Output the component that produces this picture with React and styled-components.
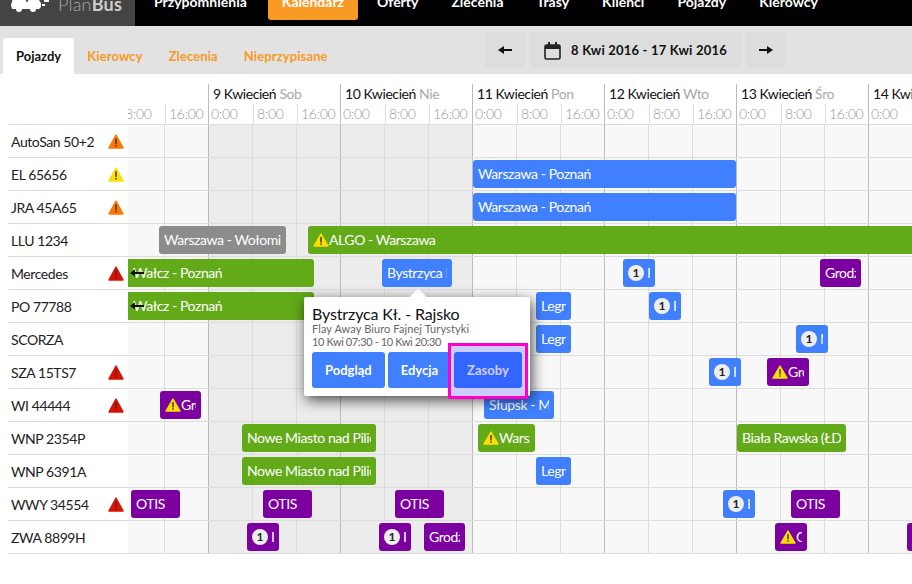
import React from 'react';
import styled, { createGlobalStyle } from 'styled-components';

const Global = createGlobalStyle`
  html, body { margin: 0; padding: 0; background: #fff; overflow: hidden; }
  body { font-family: Lato, "Noto Sans", sans-serif; font-size: 14px; color: #222; letter-spacing: -.42px; }
  * { box-sizing: border-box; }
`;

const Page = styled.div`position: relative; width: 912px; height: 584px; overflow: hidden;`;

const TopBar = styled.header`display: flex; height: 26px; background: #000; overflow: hidden;`;
const LogoBox = styled.div`
  width: 135px; height: 26px; background: #444; display: flex; align-items: flex-end; padding: 0 0 13px 11px; flex: none;
`;
const LogoName = styled.span`
  margin-left: 9px; font-size: 18px; line-height: 18px; color: #aaa; font-weight: 300; letter-spacing: .2px;
  b { font-weight: 700; color: #ccc; }
`;
const Nav = styled.nav`display: flex; gap: 5px; margin-left: 5px; height: 20px; align-items: flex-end;`;
const NavItem = styled.a`
  display: block; padding: 13px 14px 0; color: #fff; font-weight: 700; font-size: 14px; line-height: 17px; height: 40px;
  margin-top: -20px; white-space: nowrap; border-radius: 3px; letter-spacing: 0;
  background: ${p => (p.$active ? '#f99a25' : 'transparent')};
  &:first-child { margin-right: 2px; }
`;

const SubBar = styled.div`display: flex; height: 48px; background: #e2e2e2; padding-left: 3px;`;
const Tabs = styled.div`display: flex; align-self: flex-end;`;
const Tab = styled.div`
  height: 36px; padding: 0 13px; display: flex; align-items: center; font-size: 13px; font-weight: 700;
  border-radius: 3px 3px 0 0; letter-spacing: ${p => (p.$active ? '0' : '.1px')};
  color: ${p => (p.$active ? '#111' : '#f99a25')}; background: ${p => (p.$active ? '#fff' : 'transparent')};
`;
const DateNav = styled.div`display: flex; gap: 5px; margin: 6px 126px 0 auto; height: 36px;`;
const NavButton = styled.div`
  width: ${p => p.$w}px; height: 36px; background: #ddd; border-radius: 3px; display: flex; align-items: center; justify-content: center;
  gap: 10px; font-size: 13px; font-weight: 700; color: #111; letter-spacing: .2px;
`;

const Scheduler = styled.div`padding-top: 10px;`;
const HeadRow = styled.div`margin-left: 8px; border-bottom: 1px solid #ddd; height: 41px; padding-left: 120px;`;
const HeadClip = styled.div`overflow: hidden; height: 40px;`;
const HeadDays = styled.div`display: flex; margin-left: -52px; width: 1400px;`;
const Day = styled.div`width: 132px; height: 40px; flex: none; border-left: 1px solid #bbb;`;
const DayTitle = styled.div`
  height: 20px; line-height: 20px; padding-left: 4px; color: #111; white-space: nowrap;
  span { color: #aaa; }
`;
const Hours = styled.div`display: flex; height: 20px;`;
const Hour = styled.div`
  width: 44px; flex: none; line-height: 20px; padding-left: 2px; color: #999; font-weight: 300; white-space: nowrap; letter-spacing: -.3px;
  & + & { border-left: 1px solid #ddd; padding-left: 3px; }
`;

const Row = styled.div`display: flex; height: 33px; margin-left: 8px; border-bottom: 1px solid #ddd;`;
const Label = styled.div`
  width: 120px; flex: none; display: flex; align-items: center; justify-content: space-between; padding: 0 4px 0 3px; color: #222; white-space: nowrap;
`;
const Track = styled.div`
  position: relative; flex: 1; overflow: hidden; background-color: #f8f8f8;
  background-image:
    linear-gradient(90deg, #bbb 1px, transparent 1px),
    linear-gradient(90deg, #ddd 1px, transparent 1px),
    linear-gradient(90deg, #ececec, #ececec);
  background-size: 132px 100%, 44px 100%, 264px 100%;
  background-position: 80px 0, 36px 0, 80px 0;
  background-repeat: repeat-x, repeat-x, no-repeat;
`;

const COLORS = { blue: '#4080ff', green: '#62aa18', purple: '#7c00a0', gray: '#8c8c8c' };
const Event = styled.div`
  position: absolute; top: 2px; height: 28px; padding: 0 5px; display: flex; align-items: center; color: #fff; white-space: nowrap;
  border-radius: ${p => (p.$flat ? '0 3px 3px 0' : '3px')};
  background: ${p => COLORS[p.$kind]};
`;
const EventText = styled.span`flex: 1; min-width: 0; overflow: hidden; line-height: 18px;`;
const Badge = styled.span`
  flex: none; width: 16px; height: 16px; border-radius: 50%; background: #eee; color: #222; margin-right: 3px;
  font-size: 12px; font-weight: 700; line-height: 16px; text-align: center; letter-spacing: 0;
`;
const ArrowMark = styled.svg`position: absolute; left: 2px; top: 9px;`;

const Popup = styled.div`
  position: absolute; left: 304px; top: 297px; width: 226px; height: 99px; background: #fff; border-radius: 2px; padding: 9px 8px 8px;
  box-shadow: 2px 4px 14px rgba(0, 0, 0, .7);
  &::before {
    content: ''; position: absolute; left: 108px; top: -6px; width: 12px; height: 12px; background: #fff; transform: rotate(45deg);
  }
`;
const PopupTitle = styled.div`position: relative; font-size: 16px; line-height: 16px; color: #111; letter-spacing: -.14px; white-space: nowrap;`;
const PopupSub = styled.div`
  font-size: 11px; line-height: 13px; color: #666; white-space: nowrap;
  letter-spacing: ${p => (p.$tight ? '-.38px' : '.1px')};
`;
const PopupActions = styled.div`display: flex; gap: 3px; margin-top: 4px;`;
const PopupButton = styled.div`
  height: 36px; padding: 0 13px; background: #4080ff; border-radius: 3px; color: #fff; font-size: 13px; font-weight: 700; letter-spacing: 0;
  display: flex; align-items: center; white-space: nowrap;
`;
const Highlight = styled.div`
  position: absolute; left: 144px; top: 46px; width: 80px; height: 56px; border: 3px solid #ff00c8; background: rgba(0, 0, 255, .2);
`;

const Warn = ({ color = '#ffdd00', h = 14 }) => (
  <svg width="16" height={h} viewBox="0 0 16 14" preserveAspectRatio="none" style={{ flex: 'none' }}>
    <path d="M8 1 L15 13 H1 Z" fill={color} stroke={color} strokeWidth="1.4" strokeLinejoin="round" />
    <rect x="7.3" y="4" width="1.4" height="5.5" fill="#333" />
    <rect x="7.3" y="10.3" width="1.4" height="1.5" fill="#333" />
  </svg>
);

const Car = () => (
  <svg width="38" height="22" viewBox="0 0 38 22" style={{ flex: 'none' }}>
    <path d="M3 4 H12 L13 0 H26 L28 9 C29 11 30 11 30 13 V16 L28 18 H25 A3 3 0 0 1 19 18 H11 A3 3 0 0 1 5 18 H1 L0 14 Z" fill="#fff" />
    <path d="M14 8 H18 L16 11.5 Z" fill="#444" />
    <rect x="33" y="9" width="5" height="2" fill="#fff" />
    <rect x="31" y="13" width="3" height="2" fill="#fff" />
  </svg>
);

const ArrowIcon = ({ flip }) => (
  <svg width="14" height="10" viewBox="0 0 14 10" style={flip ? { transform: 'scaleX(-1)' } : undefined}>
    <path d="M0 5 L6 1 V4 H14 V6 H6 V9 Z" fill="#111" />
  </svg>
);

const CalendarIcon = () => (
  <svg width="17" height="19" viewBox="0 0 17 19">
    <rect x="1" y="4" width="15" height="14" rx="1.5" fill="none" stroke="#222" strokeWidth="1.6" />
    <rect x="1" y="4" width="15" height="4" fill="#222" />
    <rect x="4" y="1" width="2" height="5" fill="#222" />
    <rect x="11" y="1" width="2" height="5" fill="#222" />
  </svg>
);

const nav = ['Przypomnienia', 'Kalendarz', 'Oferty', 'Zlecenia', 'Trasy', 'Klienci', 'Pojazdy', 'Kierowcy'];
const days = [
  [8, ''], [9, 'Sob'], [10, 'Nie'], [11, 'Pon'], [12, 'Wto'], [13, 'Śro'], [14, 'Czw'], [15, 'Pią'],
];

const WP = 'Warszawa - Poznań';
const NM = 'Nowe Miasto nad Pilicą';
const WALCZ = 'Wałcz - Poznań';

const rows = [
  { name: 'AutoSan 50+2', warn: '#ff7700', events: [] },
  { name: 'EL 65656', warn: '#ffdd00', events: [{ x: 473, w: 263, k: 'blue', t: WP }] },
  { name: 'JRA 45A65', warn: '#ff7700', events: [{ x: 473, w: 263, k: 'blue', t: WP }] },
  { name: 'LLU 1234', events: [
    { x: 159, w: 127, k: 'gray', t: 'Warszawa - Wołomin' },
    { x: 308, w: 640, k: 'green', t: 'ALGO - Warszawa', warn: true },
  ] },
  { name: 'Mercedes', warn: '#dd1100', events: [
    { x: 128, w: 186, k: 'green', t: WALCZ, flat: true, arrow: true },
    { x: 382, w: 70, k: 'blue', t: 'Bystrzyca Kł. - Rajsko' },
    { x: 623, w: 32, k: 'blue', t: 'Płock', badge: true },
    { x: 820, w: 41, k: 'purple', t: 'Grodzisk' },
  ] },
  { name: 'PO 77788', events: [
    { x: 128, w: 186, k: 'green', t: WALCZ, flat: true, arrow: true },
    { x: 536, w: 35, k: 'blue', t: 'Legnica' },
    { x: 649, w: 32, k: 'blue', t: 'Płock', badge: true },
  ] },
  { name: 'SCORZA', events: [
    { x: 536, w: 35, k: 'blue', t: 'Legnica' },
    { x: 796, w: 32, k: 'blue', t: 'Nysa', badge: true },
  ] },
  { name: 'SZA 15TS7', warn: '#dd1100', events: [
    { x: 709, w: 32, k: 'blue', t: 'Płock', badge: true },
    { x: 767, w: 42, k: 'purple', t: 'Grodzisk', warn: true },
  ] },
  { name: 'WI 44444', warn: '#dd1100', events: [
    { x: 160, w: 41, k: 'purple', t: 'Grodzisk', warn: true },
    { x: 484, w: 70, k: 'blue', t: 'Słupsk - Malbork' },
  ] },
  { name: 'WNP 2354P', events: [
    { x: 242, w: 134, k: 'green', t: NM },
    { x: 478, w: 57, k: 'green', t: 'Warszawa', warn: true },
    { x: 737, w: 109, k: 'green', t: 'Biała Rawska (ŁDZ)' },
  ] },
  { name: 'WNP 6391A', events: [
    { x: 242, w: 134, k: 'green', t: NM },
    { x: 536, w: 35, k: 'blue', t: 'Legnica' },
  ] },
  { name: 'WWY 34554', warn: '#dd1100', events: [
    { x: 131, w: 49, k: 'purple', t: 'OTIS' },
    { x: 263, w: 49, k: 'purple', t: 'OTIS' },
    { x: 395, w: 49, k: 'purple', t: 'OTIS' },
    { x: 723, w: 32, k: 'blue', t: 'Płock', badge: true },
    { x: 791, w: 49, k: 'purple', t: 'OTIS' },
  ] },
  { name: 'ZWA 8899H', events: [
    { x: 247, w: 32, k: 'purple', t: 'Lublin', badge: true },
    { x: 379, w: 32, k: 'purple', t: 'Lublin', badge: true },
    { x: 424, w: 41, k: 'purple', t: 'Grodzisk' },
    { x: 775, w: 32, k: 'purple', t: 'Grodzisk', warn: true },
    { x: 907, w: 41, k: 'purple', t: 'Grodzisk' },
  ] },
];

export default function App() {
  return (
    <Page>
      <Global />
      <TopBar>
        <LogoBox>
          <Car />
          <LogoName>Plan<b>Bus</b></LogoName>
        </LogoBox>
        <Nav>
          {nav.map(n => <NavItem key={n} $active={n === 'Kalendarz'}>{n}</NavItem>)}
        </Nav>
      </TopBar>
      <SubBar>
        <Tabs>
          <Tab $active>Pojazdy</Tab>
          <Tab>Kierowcy</Tab>
          <Tab>Zlecenia</Tab>
          <Tab>Nieprzypisane</Tab>
        </Tabs>
        <DateNav>
          <NavButton $w={40}><ArrowIcon /></NavButton>
          <NavButton $w={211}><CalendarIcon />8 Kwi 2016 - 17 Kwi 2016</NavButton>
          <NavButton $w={40}><ArrowIcon flip /></NavButton>
        </DateNav>
      </SubBar>
      <Scheduler>
        <HeadRow>
          <HeadClip>
            <HeadDays>
              {days.map(([d, w]) => (
                <Day key={d}>
                  <DayTitle>{w && <>{d} Kwiecień <span>{w}</span></>}</DayTitle>
                  <Hours>
                    <Hour>0:00</Hour>
                    <Hour>8:00</Hour>
                    <Hour>16:00</Hour>
                  </Hours>
                </Day>
              ))}
            </HeadDays>
          </HeadClip>
        </HeadRow>
        {rows.map(r => (
          <Row key={r.name}>
            <Label>{r.name}{r.warn && <Warn color={r.warn} h={15} />}</Label>
            <Track>
              {r.events.map(e => (
                <Event key={e.x} $kind={e.k} $flat={e.flat} style={{ left: e.x - 128, width: e.w }}>
                  {e.warn && <Warn />}
                  {e.badge && <Badge>1</Badge>}
                  <EventText>{e.t}</EventText>
                  {e.arrow && (
                    <ArrowMark width="14" height="10" viewBox="0 0 14 10">
                      <path d="M0 5 L5 1.5 V4 H14 V6 H5 V8.5 Z" fill="#111" />
                    </ArrowMark>
                  )}
                </Event>
              ))}
            </Track>
          </Row>
        ))}
      </Scheduler>
      <Popup>
        <PopupTitle>Bystrzyca Kł. - Rajsko</PopupTitle>
        <PopupSub>Flay Away Biuro Fajnej Turystyki</PopupSub>
        <PopupSub $tight>10 Kwi 07:30 - 10 Kwi 20:30</PopupSub>
        <PopupActions>
          <PopupButton>Podgląd</PopupButton>
          <PopupButton>Edycja</PopupButton>
          <PopupButton>Zasoby</PopupButton>
        </PopupActions>
        <Highlight />
      </Popup>
    </Page>
  );
}
